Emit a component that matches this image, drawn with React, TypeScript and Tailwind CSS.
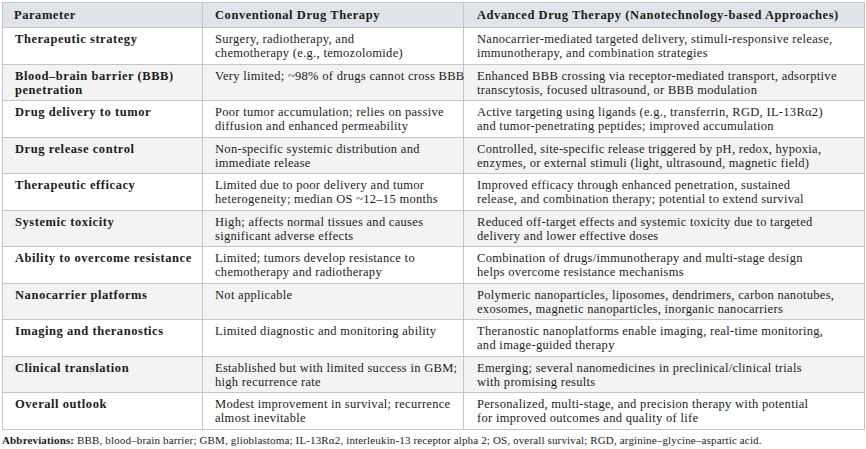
// each cell is a list of its printed lines, so the wraps match the source table
const rows: [string[], string[], string[]][] = [
  [
    ['Therapeutic strategy'],
    ['Surgery, radiotherapy, and', 'chemotherapy (e.g., temozolomide)'],
    ['Nanocarrier-mediated targeted delivery, stimuli-responsive release,', 'immunotherapy, and combination strategies'],
  ],
  [
    ['Blood–brain barrier (BBB)', 'penetration'],
    ['Very limited; ~98% of drugs cannot cross BBB'],
    ['Enhanced BBB crossing via receptor-mediated transport, adsorptive', 'transcytosis, focused ultrasound, or BBB modulation'],
  ],
  [
    ['Drug delivery to tumor'],
    ['Poor tumor accumulation; relies on passive', 'diffusion and enhanced permeability'],
    ['Active targeting using ligands (e.g., transferrin, RGD, IL-13Rα2)', 'and tumor-penetrating peptides; improved accumulation'],
  ],
  [
    ['Drug release control'],
    ['Non-specific systemic distribution and', 'immediate release'],
    ['Controlled, site-specific release triggered by pH, redox, hypoxia,', 'enzymes, or external stimuli (light, ultrasound, magnetic field)'],
  ],
  [
    ['Therapeutic efficacy'],
    ['Limited due to poor delivery and tumor', 'heterogeneity; median OS ~12–15 months'],
    ['Improved efficacy through enhanced penetration, sustained', 'release, and combination therapy; potential to extend survival'],
  ],
  [
    ['Systemic toxicity'],
    ['High; affects normal tissues and causes', 'significant adverse effects'],
    ['Reduced off-target effects and systemic toxicity due to targeted', 'delivery and lower effective doses'],
  ],
  [
    ['Ability to overcome resistance'],
    ['Limited; tumors develop resistance to', 'chemotherapy and radiotherapy'],
    ['Combination of drugs/immunotherapy and multi-stage design', 'helps overcome resistance mechanisms'],
  ],
  [
    ['Nanocarrier platforms'],
    ['Not applicable'],
    ['Polymeric nanoparticles, liposomes, dendrimers, carbon nanotubes,', 'exosomes, magnetic nanoparticles, inorganic nanocarriers'],
  ],
  [
    ['Imaging and theranostics'],
    ['Limited diagnostic and monitoring ability'],
    ['Theranostic nanoplatforms enable imaging, real-time monitoring,', 'and image-guided therapy'],
  ],
  [
    ['Clinical translation'],
    ['Established but with limited success in GBM;', 'high recurrence rate'],
    ['Emerging; several nanomedicines in preclinical/clinical trials', 'with promising results'],
  ],
  [
    ['Overall outlook'],
    ['Modest improvement in survival; recurrence', 'almost inevitable'],
    ['Personalized, multi-stage, and precision therapy with potential', 'for improved outcomes and quality of life'],
  ],
];

const Lines = ({ lines }: { lines: string[] }) => (
  <>
    {lines.map((line, i) => (
      <span key={i} className="block whitespace-nowrap">
        {line}
      </span>
    ))}
  </>
);

export default function App() {
  return (
    <div className="h-[449px] w-[866px] overflow-hidden bg-white pl-[2px] pt-[2px] [font-family:Liberation_Serif,Times_New_Roman,serif] text-[#1c1c1c]">
      <table className="w-[862px] table-fixed border-collapse border border-[#a9a9a9] text-[12.5px] leading-[14px] tracking-[0.3px]">
        <colgroup>
          <col className="w-[200px]" />
          <col className="w-[261px]" />
          <col className="w-[401px]" />
        </colgroup>
        <thead>
          <tr className="h-[25px] bg-[#dfe3ea] text-left font-bold tracking-[0.55px]">
            <th className="border border-[#c4c4c4] px-[11px] align-middle">Parameter</th>
            <th className="border border-[#c4c4c4] px-[12px] align-middle">Conventional Drug Therapy</th>
            <th className="border border-[#c4c4c4] px-[13px] align-middle">
              Advanced Drug Therapy (Nanotechnology-based Approaches)
            </th>
          </tr>
        </thead>
        <tbody>
          {rows.map(([param, conv, adv], i) => (
            <tr key={param[0]} className={`h-[36.5px] ${i % 2 === 1 ? 'bg-[#f3f3f3]' : 'bg-white'}`}>
              <td className="border border-[#c4c4c4] pb-[3px] pl-[12px] pr-[4px] pt-[4px] align-top font-bold tracking-[0.55px]">
                <Lines lines={param} />
              </td>
              <td className="border border-[#c4c4c4] pb-[3px] pl-[12px] pr-[4px] pt-[4px] align-top">
                <Lines lines={conv} />
              </td>
              <td className="border border-[#c4c4c4] pb-[3px] pl-[13px] pr-[4px] pt-[4px] align-top">
                <Lines lines={adv} />
              </td>
            </tr>
          ))}
        </tbody>
      </table>
      <p className="mt-[4px] whitespace-nowrap text-[11px] leading-[13px] tracking-[0.15px]">
        <span className="font-bold">Abbreviations:</span> BBB, blood–brain barrier; GBM, glioblastoma; IL-13Rα2,
        interleukin-13 receptor alpha 2; OS, overall survival; RGD, arginine–glycine–aspartic acid.
      </p>
    </div>
  );
}
